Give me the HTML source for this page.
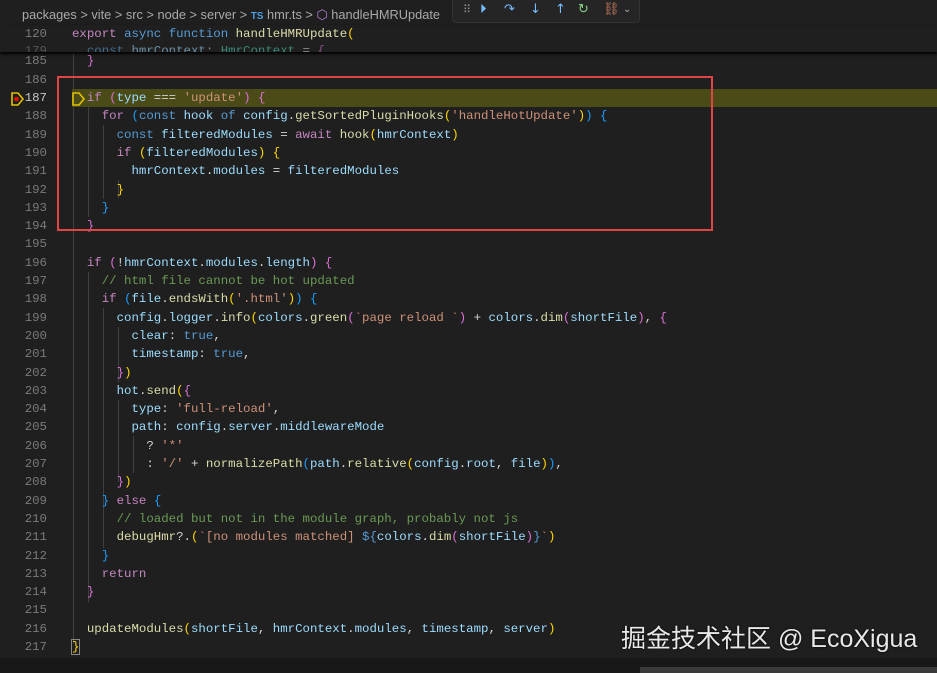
<!DOCTYPE html>
<html><head><meta charset="utf-8"><style>
body{margin:0;width:937px;height:673px;background:#1f1f1f;overflow:hidden;position:relative;font-family:"Liberation Mono",monospace;}
.bc{position:absolute;left:0;top:0;width:937px;height:27px;font-family:"Liberation Sans",sans-serif;font-size:12.8px;color:#a9a9a9;}
.bc span{position:absolute;top:7px;white-space:pre}
.l{position:absolute;left:0;height:18.3px;width:937px;font-size:12.4px;line-height:18.3px;white-space:pre}
.n{position:absolute;right:890px;color:#7a7a7a;text-align:right}
.c{position:absolute;left:72px;color:#d4d4d4}
.k{color:#c586c0}.b{color:#569cd6}.v{color:#9cdcfe}.f{color:#dcdcaa}.s{color:#ce9178}.m{color:#6a9955}
.y{color:#ffd700}.p{color:#da70d6}.u{color:#179fff}.w{color:#d4d4d4}.t{color:#4ec9b0}
.g{position:absolute;width:1px;background:#404040}
</style></head><body>
<div class="bc"><span style="left:22px">packages &gt; vite &gt; src &gt; node &gt; server &gt; <b style="color:#4f9ee0;font-size:10px">TS</b> hmr.ts &gt; <span style="position:static;color:#b180d7">⬡</span> handleHMRUpdate</span></div>
<div style="position:absolute;left:452px;top:0;width:186px;height:22px;background:#252526;border:1px solid #333;border-top:none;border-radius:0 0 4px 4px;font-family:'DejaVu Sans',sans-serif;font-size:13px;line-height:20px">
<span style="position:absolute;left:10px;color:#888;font-size:11px">⠿</span>
<span style="position:absolute;left:27px;color:#75beff">⏵</span>
<span style="position:absolute;left:51px;color:#75beff">↷</span>
<span style="position:absolute;left:77px;color:#75beff">↓</span>
<span style="position:absolute;left:102px;color:#75beff">↑</span>
<span style="position:absolute;left:125px;color:#89d185">↻</span>
<span style="position:absolute;left:150px;color:#c2775a">⛓</span>
<span style="position:absolute;left:170px;color:#aaa;font-size:10px">⌄</span></div>
<div style="position:absolute;left:0;top:25px;width:937px;height:27px;background:#1f1f1f;box-shadow:0 2px 3px #000;z-index:2;overflow:hidden">
<div class="l" style="top:0"><span class="n">120</span><span class="c"><span class="k">export</span> <span class="b">async</span> <span class="b">function</span> <span class="f">handleHMRUpdate</span><span class="y">(</span></span></div>
<div class="l" style="top:17px;height:10px;overflow:hidden;opacity:.6"><span class="n">179</span><span class="c">  <span class="b">const</span> <span class="v">hmrContext</span>: <span class="t">HmrContext</span> = <span class="p">{</span></span></div>
</div>
<div class="g" style="left:73px;top:52px;height:592px"></div>
<div class="g" style="left:88px;top:107px;height:110px"></div>
<div class="g" style="left:103px;top:125px;height:74px"></div>
<div class="g" style="left:118px;top:180px;height:18px"></div>
<div class="g" style="left:88px;top:272px;height:330px"></div>
<div class="g" style="left:103px;top:308px;height:240px"></div>
<div class="g" style="left:118px;top:327px;height:55px"></div>
<div class="g" style="left:118px;top:400px;height:82px"></div>
<div class="g" style="left:133px;top:436px;height:37px"></div>
<div style="position:absolute;left:72px;top:89px;width:865px;height:18px;background:#4b4b18"></div>
<div class="l" style="top:52.4px"><span class="n">185</span><span class="c">  <span class="p">}</span></span></div>
<div class="l" style="top:70.7px"><span class="n">186</span></div>
<div class="l" style="top:89px"><span class="n" style="color:#c6c6c6">187</span><span class="c">  <span class="k">if</span> <span class="p">(</span><span class="v">type</span> === <span class="s">'update'</span><span class="p">)</span> <span class="p">{</span></span></div>
<div class="l" style="top:107.3px"><span class="n">188</span><span class="c">    <span class="k">for</span> <span class="u">(</span><span class="b">const</span> <span class="v">hook</span> <span class="b">of</span> <span class="v">config</span>.<span class="f">getSortedPluginHooks</span><span class="y">(</span><span class="s">'handleHotUpdate'</span><span class="y">)</span><span class="u">)</span> <span class="u">{</span></span></div>
<div class="l" style="top:125.6px"><span class="n">189</span><span class="c">      <span class="b">const</span> <span class="v">filteredModules</span> = <span class="k">await</span> <span class="f">hook</span><span class="y">(</span><span class="v">hmrContext</span><span class="y">)</span></span></div>
<div class="l" style="top:143.9px"><span class="n">190</span><span class="c">      <span class="k">if</span> <span class="y">(</span><span class="v">filteredModules</span><span class="y">)</span> <span class="y">{</span></span></div>
<div class="l" style="top:162.2px"><span class="n">191</span><span class="c">        <span class="v">hmrContext</span>.<span class="v">modules</span> = <span class="v">filteredModules</span></span></div>
<div class="l" style="top:180.5px"><span class="n">192</span><span class="c">      <span class="y">}</span></span></div>
<div class="l" style="top:198.8px"><span class="n">193</span><span class="c">    <span class="u">}</span></span></div>
<div class="l" style="top:217.1px"><span class="n">194</span><span class="c">  <span class="p">}</span></span></div>
<div class="l" style="top:235.4px"><span class="n">195</span></div>
<div class="l" style="top:253.7px"><span class="n">196</span><span class="c">  <span class="k">if</span> <span class="p">(</span>!<span class="v">hmrContext</span>.<span class="v">modules</span>.<span class="v">length</span><span class="p">)</span> <span class="p">{</span></span></div>
<div class="l" style="top:272px"><span class="n">197</span><span class="c">    <span class="m">// html file cannot be hot updated</span></span></div>
<div class="l" style="top:290.3px"><span class="n">198</span><span class="c">    <span class="k">if</span> <span class="u">(</span><span class="v">file</span>.<span class="f">endsWith</span><span class="y">(</span><span class="s">'.html'</span><span class="y">)</span><span class="u">)</span> <span class="u">{</span></span></div>
<div class="l" style="top:308.6px"><span class="n">199</span><span class="c">      <span class="v">config</span>.<span class="v">logger</span>.<span class="f">info</span><span class="y">(</span><span class="v">colors</span>.<span class="f">green</span><span class="p">(</span><span class="s">`page reload `</span><span class="p">)</span> + <span class="v">colors</span>.<span class="f">dim</span><span class="p">(</span><span class="v">shortFile</span><span class="p">)</span>, <span class="p">{</span></span></div>
<div class="l" style="top:326.9px"><span class="n">200</span><span class="c">        <span class="v">clear</span>: <span class="b">true</span>,</span></div>
<div class="l" style="top:345.2px"><span class="n">201</span><span class="c">        <span class="v">timestamp</span>: <span class="b">true</span>,</span></div>
<div class="l" style="top:363.5px"><span class="n">202</span><span class="c">      <span class="p">}</span><span class="y">)</span></span></div>
<div class="l" style="top:381.8px"><span class="n">203</span><span class="c">      <span class="v">hot</span>.<span class="f">send</span><span class="y">(</span><span class="p">{</span></span></div>
<div class="l" style="top:400.1px"><span class="n">204</span><span class="c">        <span class="v">type</span>: <span class="s">'full-reload'</span>,</span></div>
<div class="l" style="top:418.4px"><span class="n">205</span><span class="c">        <span class="v">path</span>: <span class="v">config</span>.<span class="v">server</span>.<span class="v">middlewareMode</span></span></div>
<div class="l" style="top:436.7px"><span class="n">206</span><span class="c">          ? <span class="s">'*'</span></span></div>
<div class="l" style="top:455px"><span class="n">207</span><span class="c">          : <span class="s">'/'</span> + <span class="f">normalizePath</span><span class="u">(</span><span class="v">path</span>.<span class="f">relative</span><span class="y">(</span><span class="v">config</span>.<span class="v">root</span>, <span class="v">file</span><span class="y">)</span><span class="u">)</span>,</span></div>
<div class="l" style="top:473.3px"><span class="n">208</span><span class="c">      <span class="p">}</span><span class="y">)</span></span></div>
<div class="l" style="top:491.6px"><span class="n">209</span><span class="c">    <span class="u">}</span> <span class="k">else</span> <span class="u">{</span></span></div>
<div class="l" style="top:509.9px"><span class="n">210</span><span class="c">      <span class="m">// loaded but not in the module graph, probably not js</span></span></div>
<div class="l" style="top:528.2px"><span class="n">211</span><span class="c">      <span class="f">debugHmr</span>?.<span class="y">(</span><span class="s">`[no modules matched] </span><span class="b">${</span><span class="v">colors</span>.<span class="f">dim</span><span class="p">(</span><span class="v">shortFile</span><span class="p">)</span><span class="b">}</span><span class="s">`</span><span class="y">)</span></span></div>
<div class="l" style="top:546.5px"><span class="n">212</span><span class="c">    <span class="u">}</span></span></div>
<div class="l" style="top:564.8px"><span class="n">213</span><span class="c">    <span class="k">return</span></span></div>
<div class="l" style="top:583.1px"><span class="n">214</span><span class="c">  <span class="p">}</span></span></div>
<div class="l" style="top:601.4px"><span class="n">215</span></div>
<div class="l" style="top:619.7px"><span class="n">216</span><span class="c">  <span class="f">updateModules</span><span class="y">(</span><span class="v">shortFile</span>, <span class="v">hmrContext</span>.<span class="v">modules</span>, <span class="v">timestamp</span>, <span class="v">server</span><span class="y">)</span></span></div>
<div class="l" style="top:638px"><span class="n">217</span><span class="c"><span class="y" style="outline:1px solid #888">}</span></span></div>
<div style="position:absolute;left:57px;top:76px;width:652px;height:151px;border:2px solid #e04545"></div>
<svg style="position:absolute;left:10px;top:91px" width="16" height="16"><path d="M2 2h6l5 6-5 6H2z" fill="none" stroke="#e2c000" stroke-width="1.6"/><circle cx="6.5" cy="8" r="2.3" fill="#e51400"/></svg>
<svg style="position:absolute;left:72px;top:91px" width="14" height="16"><path d="M1 2h6l5 6-5 6H1z" fill="none" stroke="#e2c000" stroke-width="1.6"/></svg>
<div style="position:absolute;left:0;top:658px;width:937px;height:15px;background:#181818"></div>
<div style="position:absolute;left:640px;top:667px;width:297px;height:6px;background:#3a3a3a"></div>
<div style="position:absolute;left:621px;top:619px;font-family:'Liberation Sans','Noto Sans CJK SC',sans-serif;font-size:25px;color:#e8e8e8;text-shadow:0 0 2px #000;white-space:nowrap">掘金技术社区 @ EcoXigua</div>
</body></html>
